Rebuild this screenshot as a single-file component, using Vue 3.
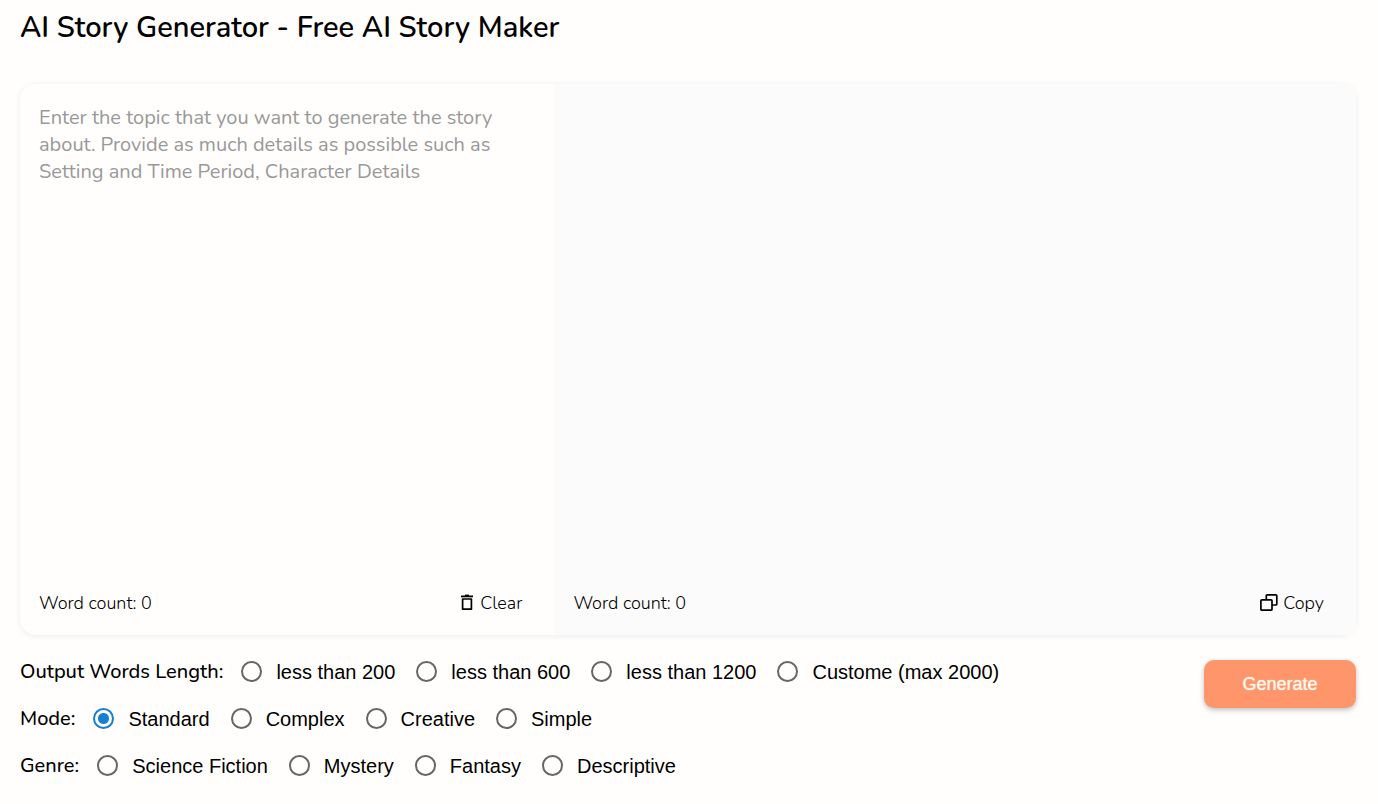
<script setup>
import { ref, reactive, computed } from 'vue'

const topic = ref('')
const story = ref('')
const countWords = (text) => text.trim().split(/\s+/).filter(Boolean).length
const topicCount = computed(() => countWords(topic.value))
const storyCount = computed(() => countWords(story.value))

const groups = [
  { key: 'length', label: 'Output Words Length:', options: ['less than 200', 'less than 600', 'less than 1200', 'Custome (max 2000)'] },
  { key: 'mode', label: 'Mode:', options: ['Standard', 'Complex', 'Creative', 'Simple'] },
  { key: 'genre', label: 'Genre:', options: ['Science Fiction', 'Mystery', 'Fantasy', 'Descriptive'] },
]
const selected = reactive({ length: '', mode: 'Standard', genre: '' })
</script>

<template>
  <main class="page">
    <h1 class="title">AI Story Generator - Free AI Story Maker</h1>

    <section class="editor">
      <div class="pane">
        <textarea
          v-model="topic"
          class="topic"
          aria-label="Story topic"
          placeholder="Enter the topic that you want to generate the story about. Provide as much details as possible such as Setting and Time Period, Character Details"
        ></textarea>
        <div class="pane-footer">
          <span>Word count: {{ topicCount }}</span>
          <button type="button" class="action" @click="topic = ''">
            <svg width="14" height="18" viewBox="0 0 14 18" fill="none" stroke="currentColor" aria-hidden="true">
              <path d="M0 2.4H12" stroke-width="1.8" />
              <path d="M4 1.4H8" stroke-width="1.6" />
              <path d="M1.6 5H10.4V15.2H1.6Z" stroke-width="1.7" stroke-linejoin="round" />
            </svg>
            Clear
          </button>
        </div>
      </div>
      <div class="pane output">
        <div class="story">{{ story }}</div>
        <div class="pane-footer">
          <span>Word count: {{ storyCount }}</span>
          <button type="button" class="action">
            <svg width="18" height="18" viewBox="0 0 18 18" fill="none" stroke="currentColor" stroke-width="1.7" stroke-linejoin="round" aria-hidden="true">
              <path d="M1.8 5.8H11Q12 5.8 12 6.8V15.2Q12 16.2 11 16.2H1.8Q0.9 16.2 0.9 15.2V6.8Q0.9 5.8 1.8 5.8Z" />
              <path d="M6.3 5.8V1.8Q6.3 0.9 7.2 0.9H15.8Q16.8 0.9 16.8 1.8V10Q16.8 11 15.8 11H12" />
            </svg>
            Copy
          </button>
        </div>
      </div>
    </section>

    <section class="controls">
      <form class="groups">
        <div v-for="group in groups" :key="group.key" class="group" role="radiogroup" :aria-labelledby="group.key">
          <span :id="group.key" class="group-label">{{ group.label }}</span>
          <div class="options">
            <label v-for="option in group.options" :key="option" class="option">
              <input v-model="selected[group.key]" type="radio" :name="group.key" :value="option" />
              {{ option }}
            </label>
          </div>
        </div>
      </form>
      <button type="button" class="generate">Generate</button>
    </section>
  </main>
</template>

<style>
body {
  background: #fffefd;
}
</style>

<style scoped>
.page {
  padding: 8px 22px 8px 20px;
  color: #000;
  font-family: Nunito, "Open Sans", sans-serif;
}
.title {
  margin: 0;
  font-size: 29px;
  line-height: 40px;
  font-weight: 650;
}
.editor {
  display: grid;
  grid-template-columns: 2fr 3fr;
  margin-top: 36px;
  border-radius: 16px;
  box-shadow: 0 1px 6px rgba(0, 0, 0, 0.08);
}
.pane {
  display: flex;
  flex-direction: column;
  min-width: 0;
}
.output {
  background: #fbfbfc;
}
.topic,
.story {
  box-sizing: border-box;
  height: 488px;
  width: 100%;
  padding: 20px 19px;
  border: 0;
  background: transparent;
  font-family: inherit;
  font-size: 20px;
  line-height: 27px;
}
.topic {
  display: block;
  outline: 0;
  resize: none;
}
.topic::placeholder {
  color: #999;
  opacity: 1;
}
.pane-footer {
  display: flex;
  align-items: center;
  justify-content: space-between;
  height: 63px;
  box-sizing: border-box;
  padding: 0 32px 1px 19px;
  font-size: 18px;
  line-height: 24px;
  font-weight: 300;
}
.action {
  display: flex;
  align-items: center;
  gap: 5px;
  padding: 0;
  border: 0;
  background: none;
  color: inherit;
  font: inherit;
  cursor: pointer;
}
.controls {
  display: flex;
  align-items: flex-start;
  justify-content: space-between;
  margin-top: 13px;
}
.group {
  display: flex;
  align-items: center;
  gap: 18px;
  height: 47px;
}
.group-label {
  font-size: 20px;
  font-weight: 500;
}
.options {
  display: flex;
  gap: 21px;
}
.option {
  display: flex;
  align-items: center;
  gap: 14px;
  font-family: "Liberation Sans", Arial, sans-serif;
  font-size: 20px;
  line-height: 28px;
}
.option input {
  appearance: none;
  width: 21px;
  height: 21px;
  margin: 0;
  border: 2px solid #666;
  border-radius: 50%;
}
.option input:checked {
  border-color: #1580d0;
  background: radial-gradient(circle, #1580d0 5px, transparent 6px);
}
.generate {
  width: 152px;
  height: 48px;
  margin-top: 12px;
  border: 0;
  border-radius: 10px;
  background: #ff966b;
  box-shadow: 0 2px 5px rgba(0, 0, 0, 0.25);
  color: #fff8ee;
  font-family: "Liberation Sans", Arial, sans-serif;
  font-size: 18px;
  text-shadow: 0 0 1px #fff8ee;
  cursor: pointer;
}
</style>
